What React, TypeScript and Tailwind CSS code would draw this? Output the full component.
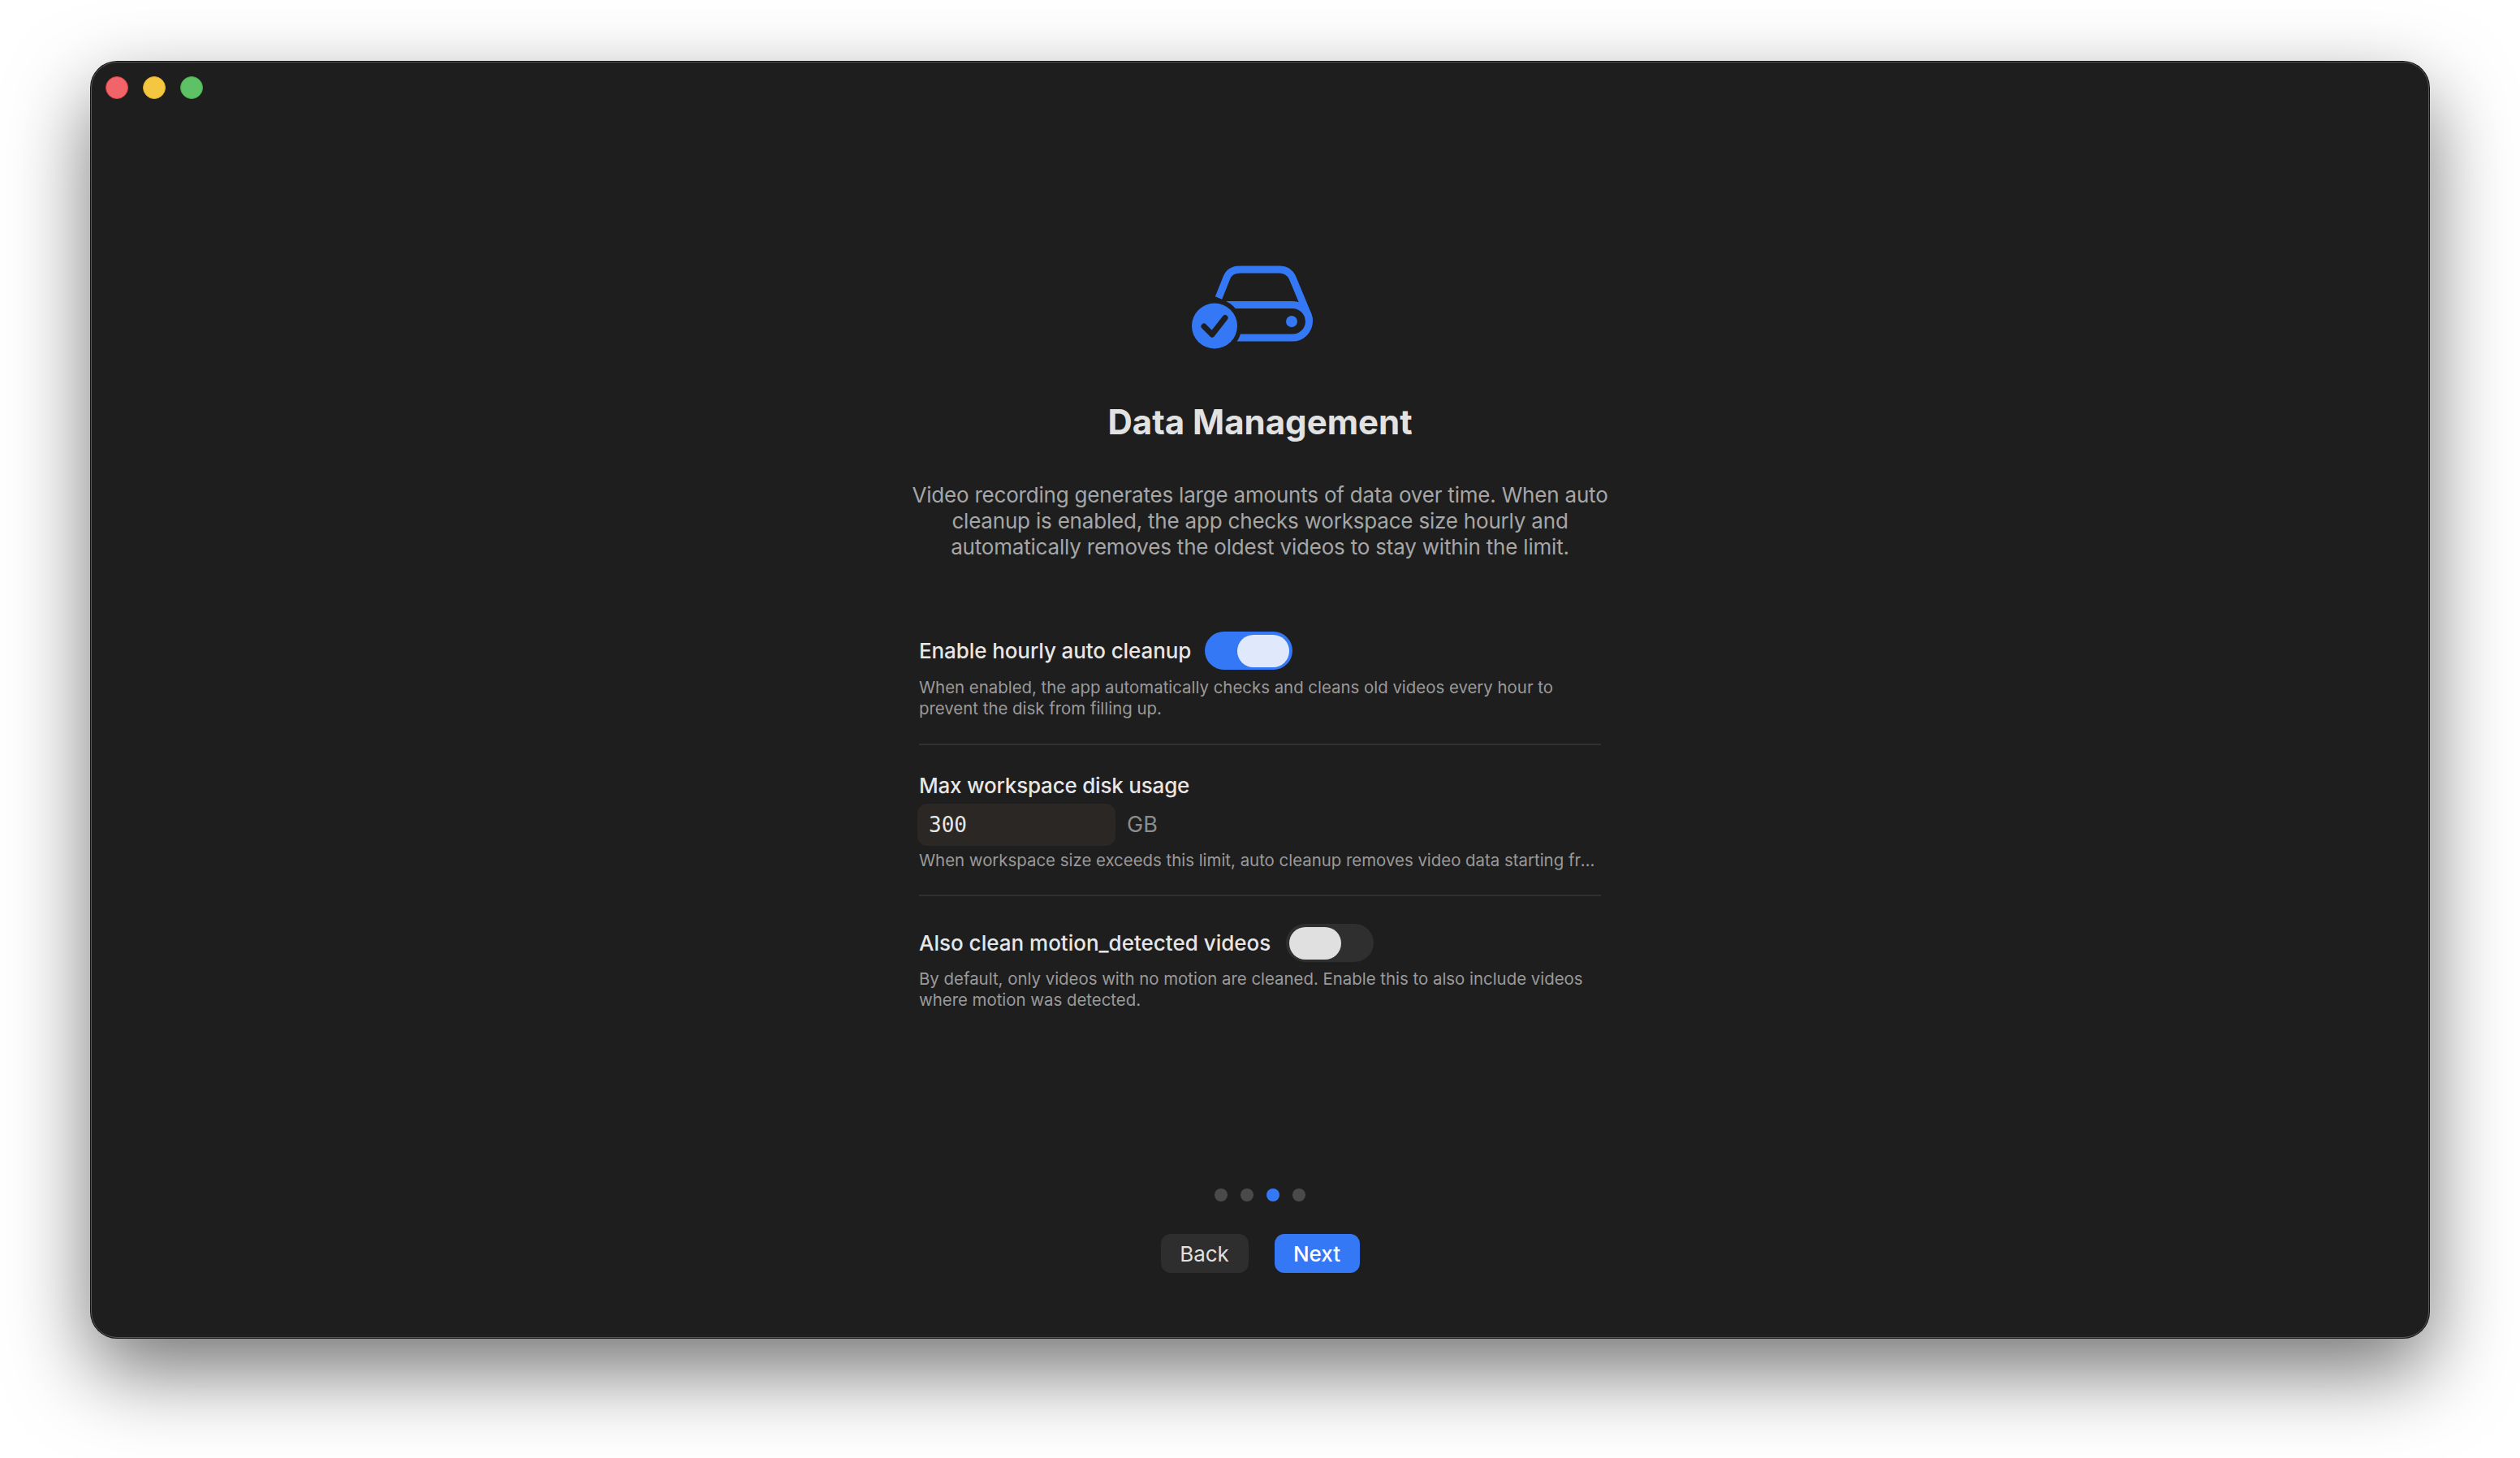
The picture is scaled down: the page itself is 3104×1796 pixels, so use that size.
import React from "react";

const Toggle = ({ on }: { on: boolean }) => (
  <button
    className={
      on
        ? "flex h-[47px] w-[108px] items-center justify-end rounded-full bg-[#3478f6] px-1"
        : "flex h-[47px] w-[108px] items-center justify-start rounded-full bg-[#2f2f2f] px-1"
    }
  >
    <span
      className={
        on
          ? "h-10 w-16 rounded-full bg-[#dfe9fb]"
          : "h-10 w-16 rounded-full bg-[#e0e0e0]"
      }
    />
  </button>
);

const DiskIcon = () => (
  <svg width="300" height="160" viewBox="0 0 300 160" fill="none" className="-ml-[3px]">
    <path
      d="M100 77 L110 52 Q114 42 127 42 H175 Q186 42 191 52 L208 93 Q211.5 100 211.5 106 A20.5 20.5 0 0 1 191 126 H120"
      stroke="#3478f6"
      strokeWidth="9"
    />
    <path
      d="M110 85.5 H191 A20.5 20.5 0 0 1 211.5 106"
      stroke="#3478f6"
      strokeWidth="9"
    />
    <circle cx="95" cy="111.5" r="33.5" fill="#1e1e1e" />
    <circle cx="95" cy="111.5" r="28" fill="#3478f6" />
    <path
      d="M82 112 L92 122 L108 101.5"
      stroke="#1e1e1e"
      strokeWidth="7"
      strokeLinecap="round"
      strokeLinejoin="round"
    />
    <circle cx="190" cy="106" r="7" fill="#3478f6" />
  </svg>
);

export default function App() {
  return (
    <div className="h-[1796px] w-[3104px] overflow-hidden bg-white pl-[112px] pt-[76px] font-['Inter',sans-serif]">
      <div className="flex h-[1572px] w-[2880px] flex-col items-center rounded-[32px] border border-[#565656] bg-[#1e1e1e] shadow-[0_0_0_1px_#111,0_40px_100px_rgba(0,0,0,0.55)]">
        {/* traffic lights */}
        <div className="flex w-full gap-[18px] pl-[17px] pt-[17px]">
          <div className="h-7 w-7 rounded-full border border-[#e2413f] bg-[#f0646a]" />
          <div className="h-7 w-7 rounded-full border border-[#e0ae28] bg-[#f5c63f]" />
          <div className="h-7 w-7 rounded-full border border-[#3fb34a] bg-[#5ec165]" />
        </div>

        <div className="mt-[168px]">
          <DiskIcon />
        </div>

        <h1 className="mt-[42px] text-[42px] leading-[56px] font-bold text-[#e2e2e2]">
          Data Management
        </h1>

        <p className="mt-[46px] w-[880px] text-center text-[26px] leading-8 tracking-[-0.2px] text-[#a6a6a6]">
          Video recording generates large amounts of data over time. When auto
          cleanup is enabled, the app checks workspace size hourly and
          automatically removes the oldest videos to stay within the limit.
        </p>

        <div className="mt-[88px] flex w-[840px] flex-col">
          <div className="border-b-2 border-[#303030] pb-[30px]">
            <div className="flex items-center gap-[17px]">
              <span className="text-[26px] leading-[47px] font-medium tracking-[-0.1px] text-[#e6e6e6]">
                Enable hourly auto cleanup
              </span>
              <Toggle on />
            </div>
            <p className="mt-[9px] text-[20.4px] leading-[26px] text-[#9a9a9a]">
              When enabled, the app automatically checks and cleans old videos
              every hour to prevent the disk from filling up.
            </p>
          </div>

          <div className="border-b-2 border-[#303030] pb-[29px] pt-[34px]">
            <div className="text-[26px] leading-8 font-medium tracking-[-0.2px] text-[#e6e6e6]">
              Max workspace disk usage
            </div>
            <div className="mt-[6px] flex items-center gap-[14px]">
              <input
                readOnly
                value="300"
                className="-ml-[2px] h-[52px] w-[244px] rounded-xl bg-[#2a2725] px-[14px] font-['DejaVu_Sans_Mono',monospace] text-[26px] text-[#e6e6e6] outline-none"
              />
              <span className="text-[27px] text-[#8c8c8c]">GB</span>
            </div>
            <p className="mt-[5px] truncate text-[20.4px] leading-[26px] text-[#9a9a9a]">
              When workspace size exceeds this limit, auto cleanup removes video
              data starting from the oldest recordings.
            </p>
          </div>

          <div className="pt-[34px]">
            <div className="flex items-center gap-[19px]">
              <span className="text-[26px] leading-[47px] font-medium text-[#e6e6e6]">
                Also clean motion_detected videos
              </span>
              <Toggle on={false} />
            </div>
            <p className="mt-[8px] text-[20.4px] leading-[26px] text-[#9a9a9a]">
              By default, only videos with no motion are cleaned. Enable this to
              also include videos where motion was detected.
            </p>
          </div>
        </div>

        <div className="mt-auto flex gap-4">
          <div className="h-4 w-4 rounded-full bg-[#4a4a4a]" />
          <div className="h-4 w-4 rounded-full bg-[#4a4a4a]" />
          <div className="h-4 w-4 rounded-full bg-[#3478f6]" />
          <div className="h-4 w-4 rounded-full bg-[#4a4a4a]" />
        </div>

        <div className="mb-[79px] mt-10 flex gap-8">
          <button className="h-12 w-[108px] rounded-xl bg-[#2e2e2e] text-[26px] text-[#e0e0e0]">
            Back
          </button>
          <button className="h-12 w-[105px] rounded-xl bg-[#3478f6] text-[26px] font-medium text-white">
            Next
          </button>
        </div>
      </div>
    </div>
  );
}
